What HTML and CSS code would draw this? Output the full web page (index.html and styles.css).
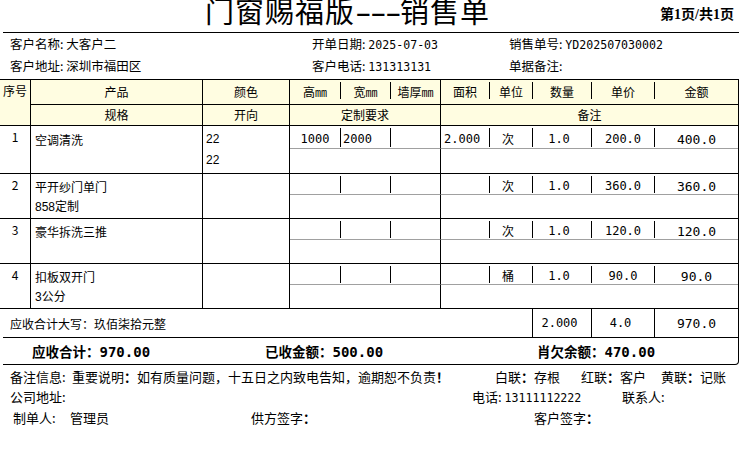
FILE: index.html
```html
<!DOCTYPE html>
<html lang="zh-CN">
<head>
<meta charset="utf-8">
<title>销售单</title>
<link rel="stylesheet" href="styles.css">
</head>
<body>
<div class="page">
  <header class="top">
    <h1 class="title">门窗赐福版<span class="dash">---</span>销售单</h1>
    <div class="pager">第1页/共1页</div>
  </header>

  <section class="info">
    <div>客户名称: 大客户二</div>
    <div>开单日期: <span class="mono">2025-07-03</span></div>
    <div>销售单号: <span class="mono">YD202507030002</span></div>
    <div>客户地址: 深圳市福田区</div>
    <div>客户电话: <span class="mono">131313131</span></div>
    <div>单据备注:</div>
  </section>

  <div class="sheet">
    <div class="thead">
      <div class="c hno">序号</div>
      <div class="c h1 full">产品</div>
      <div class="c h1 full">颜色</div>
      <div class="c h1 gap"><span>高㎜</span></div>
      <div class="c h1 gap"><span>宽㎜</span></div>
      <div class="c h1 full">墙厚㎜</div>
      <div class="c h1 gap"><span>面积</span></div>
      <div class="c h1 gap"><span>单位</span></div>
      <div class="c h1 gap"><span>数量</span></div>
      <div class="c h1 gap"><span>单价</span></div>
      <div class="c h1">金额</div>
      <div class="c h2 full">规格</div>
      <div class="c h2 full">开向</div>
      <div class="c h2 full s3">定制要求</div>
      <div class="c h2 s5">备注</div>
    </div>

    <div class="row first">
      <div class="c no">1</div>
      <div class="c nm">空调清洗</div>
      <div class="c cl">22</div>
      <div class="c gp"><span class="num">1000</span></div>
      <div class="c gp lft"><span class="num">2000</span></div>
      <div class="c tk"></div>
      <div class="c gp area"><span class="num">2.000</span></div>
      <div class="c gp unit"><span>次</span></div>
      <div class="c gp qty"><span class="num">1.0</span></div>
      <div class="c gp"><span class="num">200.0</span></div>
      <div class="c amt"><span class="num big">400.0</span></div>
      <div class="c sp"></div>
      <div class="c cl2">22</div>
      <div class="c req"></div>
      <div class="c memo"></div>
    </div>

    <div class="row">
      <div class="c no">2</div>
      <div class="c nm">平开纱门单门</div>
      <div class="c cl"></div>
      <div class="c gp"><span></span></div>
      <div class="c gp"><span></span></div>
      <div class="c tk"></div>
      <div class="c gp"><span></span></div>
      <div class="c gp unit"><span>次</span></div>
      <div class="c gp qty"><span class="num">1.0</span></div>
      <div class="c gp"><span class="num">360.0</span></div>
      <div class="c amt"><span class="num big">360.0</span></div>
      <div class="c sp">858定制</div>
      <div class="c cl2"></div>
      <div class="c req"></div>
      <div class="c memo"></div>
    </div>

    <div class="row">
      <div class="c no">3</div>
      <div class="c nm">豪华拆洗三推</div>
      <div class="c cl"></div>
      <div class="c gp"><span></span></div>
      <div class="c gp"><span></span></div>
      <div class="c tk"></div>
      <div class="c gp"><span></span></div>
      <div class="c gp unit"><span>次</span></div>
      <div class="c gp qty"><span class="num">1.0</span></div>
      <div class="c gp"><span class="num">120.0</span></div>
      <div class="c amt"><span class="num big">120.0</span></div>
      <div class="c sp"></div>
      <div class="c cl2"></div>
      <div class="c req"></div>
      <div class="c memo"></div>
    </div>

    <div class="row">
      <div class="c no">4</div>
      <div class="c nm">扣板双开门</div>
      <div class="c cl"></div>
      <div class="c gp"><span></span></div>
      <div class="c gp"><span></span></div>
      <div class="c tk"></div>
      <div class="c gp"><span></span></div>
      <div class="c gp unit"><span>桶</span></div>
      <div class="c gp qty"><span class="num">1.0</span></div>
      <div class="c gp"><span class="num">90.0</span></div>
      <div class="c amt"><span class="num big">90.0</span></div>
      <div class="c sp">3公分</div>
      <div class="c cl2"></div>
      <div class="c req"></div>
      <div class="c memo"></div>
    </div>

    <div class="sumrow">
      <div class="c words">应收合计大写：玖佰柒拾元整</div>
      <div class="c sq"><span class="num">2.000</span></div>
      <div class="c sq"><span class="num">4.0</span></div>
      <div class="c"><span class="num big">970.0</span></div>
    </div>
  </div>

  <div class="totals">
    <div>应收合计：<span class="bnum">970.00</span></div>
    <div>已收金额：<span class="bnum">500.00</span></div>
    <div>肖欠余额：<span class="bnum">470.00</span></div>
  </div>

  <footer class="foot">
    <div class="frow f1">
      <div>备注信息:</div>
      <div>重要说明<b>：</b>如有质量问题，十五日之内致电告知，逾期恕不负责<b>！</b></div>
      <div>白联<b>：</b>存根</div>
      <div>红联<b>：</b>客户</div>
      <div>黄联<b>：</b>记账</div>
    </div>
    <div class="frow f2">
      <div>公司地址:</div>
      <div>电话: <span class="mono">13111112222</span></div>
      <div>联系人:</div>
    </div>
    <div class="frow f3">
      <div>制单人:</div>
      <div>管理员</div>
      <div>供方签字<b>：</b></div>
      <div>客户签字<b>：</b></div>
    </div>
  </footer>
</div>
</body>
</html>
```
FILE: styles.css
```css
* { box-sizing: border-box; }

html, body {
  margin: 0;
  padding: 0;
  background: #fff;
}

body {
  width: 745px;
  height: 454px;
  overflow: hidden;
  font-family: "Noto Sans CJK SC", sans-serif;
  font-size: 12px;
  color: #000;
}

.mono {
  font-family: "DejaVu Sans Mono", "Noto Sans CJK SC", monospace;
  font-size: 11.6px;
}

/* ---------- title ---------- */
.top {
  height: 32px;
  display: flex;
  align-items: flex-start;
}

.title {
  margin: -6px 0 0 205px;
  font-size: 29px;
  line-height: 32px;
  letter-spacing: 1px;
  font-weight: 400;
  white-space: nowrap;
}

.dash {
  display: inline-block;
  width: 45px;
  font-family: "Liberation Sans", sans-serif;
  font-size: 30px;
  letter-spacing: -1px;
  transform: scaleX(1.667);
  transform-origin: left center;
}

.pager {
  margin-left: auto;
  padding-right: 11px;
  font-family: "Liberation Serif", "Noto Sans CJK SC", serif;
  font-size: 14px;
  font-weight: 700;
  line-height: 30px;
}

/* ---------- customer info ---------- */
.info {
  margin-left: 3px;
  width: 736px;
  border-top: 1px solid #000;
  padding: 0 0 2px 7px;
  display: grid;
  grid-template-columns: 302px 197px 1fr;
  grid-auto-rows: 22px;
  font-size: 12.5px;
  line-height: 22px;
  white-space: nowrap;
}

/* ---------- sheet ---------- */
.sheet {
  width: 739px;
  border-right: 1px solid #000;
  --cols: 31px 172px 87px 51px 50px 50px 49px 43px 59px 63px 83px;
}

.c {
  display: flex;
  align-items: center;
  justify-content: center;
  min-width: 0;
  white-space: nowrap;
}

.thead {
  display: grid;
  grid-template-columns: var(--cols);
  grid-template-rows: 25px 21px;
  border-top: 1px solid #000;
  background: #fffde1;
}

.thead .c {
  border-bottom: 1px solid #000;
}

.hno {
  grid-row: span 2;
  border-right: 1px solid #000;
  align-items: flex-start;
  line-height: 22px;
}

.h1 { padding-bottom: 1px; }
.h2 { padding-bottom: 1px; }

.full { border-right: 1px solid #000; }

.thead .gap {
  align-items: stretch;
  padding: 2px 0 5px;
}

.thead .gap > span {
  flex: 1;
  display: flex;
  align-items: center;
  justify-content: center;
  border-right: 1px solid #000;
  padding-top: 2px;
}

.s3 { grid-column: span 3; }
.s5 { grid-column: span 5; }

/* data rows */
.row {
  display: grid;
  grid-template-columns: var(--cols);
  grid-template-rows: 21px 23px;
  border-bottom: 1px solid #000;
}

.row.first {
  grid-template-rows: 23px 24px;
}

.row .no {
  grid-row: span 2;
  border-right: 1px solid #000;
  align-items: flex-start;
  padding-top: 3px;
  line-height: 16px;
}

.nm, .sp {
  justify-content: flex-start;
  padding-left: 4px;
  border-right: 1px solid #000;
}

.nm { padding-top: 3px; }
.sp { padding-bottom: 2px; }

.cl, .cl2 {
  justify-content: flex-start;
  padding-left: 3px;
  border-right: 1px solid #000;
  font-family: "Liberation Sans", "Noto Sans CJK SC", sans-serif;
}

.cl { padding-top: 3px; }
.cl2 { padding-bottom: 2px; }

.sp { font-family: "Liberation Sans", "Noto Sans CJK SC", sans-serif; }

.row .gp, .row .tk, .row .amt {
  border-bottom: 1px solid #a0a0a0;
}

.row .gp {
  align-items: stretch;
  padding: 2px 0 1px;
}

.row .gp > span {
  flex: 1;
  display: flex;
  align-items: center;
  justify-content: center;
  border-right: 1px solid #000;
  padding-top: 2px;
}

.row .lft > span { justify-content: flex-start; padding-left: 2px; }
.row .area > span { justify-content: flex-start; padding-left: 3px; }
.row .unit > span { padding-right: 6px; }
.row .qty > span { padding-right: 6px; }

.tk { border-right: 1px solid #000; }

.amt { padding-top: 4px; }

.req {
  grid-column: span 3;
  border-right: 1px solid #000;
}

.memo { grid-column: span 5; }

.num {
  font-family: "DejaVu Sans Mono", monospace;
  font-size: 12px;
}

.num.big { font-size: 13px; }

/* amount in words */
.sumrow {
  display: grid;
  grid-template-columns: 533px 59px 63px 83px;
  height: 28px;
}

.words {
  justify-content: flex-start;
  padding-left: 10px;
  border-right: 1px solid #000;
}

.sq {
  border-right: 1px solid #000;
  padding-right: 5px;
}

/* totals */
.totals {
  margin-left: 3px;
  width: 736px;
  height: 28px;
  border: 1px solid #000;
  border-left: 0;
  border-bottom-right-radius: 4px;
  padding-left: 29px;
  display: grid;
  grid-template-columns: 233px 272px 1fr;
  align-items: center;
  font-size: 13.5px;
  font-weight: 700;
  white-space: nowrap;
}

.bnum {
  font-family: "DejaVu Sans Mono", monospace;
  font-size: 14px;
  font-weight: 700;
}

/* footer */
.foot {
  font-size: 13px;
  white-space: nowrap;
}

.foot b { font-weight: 700; }

.frow {
  display: grid;
  align-items: center;
}

.f1 {
  height: 22px;
  padding-left: 10px;
  grid-template-columns: 62px 423px 86px 80px 1fr;
}

.f2 {
  height: 19px;
  padding-left: 10px;
  grid-template-columns: 462px 150px 1fr;
}

.f3 {
  height: 23px;
  padding-left: 13px;
  grid-template-columns: 57px 181px 283px 1fr;
}
```
